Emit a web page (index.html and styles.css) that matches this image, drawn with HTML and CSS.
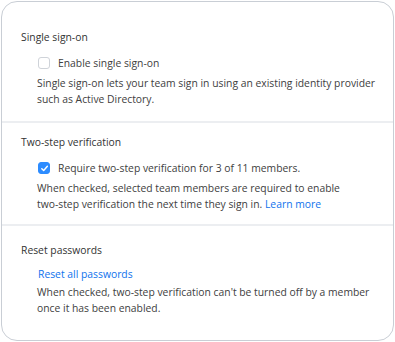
FILE: index.html
```html
<!DOCTYPE html>
<html lang="en">
<head>
    <meta charset="UTF-8">
    <meta name="viewport" content="width=device-width, initial-scale=1.0">
    <title>Security settings</title>
    <link rel="stylesheet" href="styles.css">
</head>
<body>
    <div class="settings-card">
        <div class="setting-section first">
            <div class="section-title">Single sign-on</div>
            <div class="setting-body">
                <label class="check-row">
                    <span class="checkbox"></span>
                    <span>Enable single sign-on</span>
                </label>
                <p class="setting-desc">Single sign-on lets your team sign in using an existing identity provider such as Active Directory.</p>
            </div>
        </div>

        <div class="setting-section">
            <div class="section-title">Two-step verification</div>
            <div class="setting-body">
                <label class="check-row">
                    <span class="checkbox checked">
                        <svg width="9" height="9" viewBox="0 0 10 10"><path d="M2 5.2 L4.1 7.3 L8.2 2.6" fill="none" stroke="#fff" stroke-width="1.6" stroke-linecap="round" stroke-linejoin="round"/></svg>
                    </span>
                    <span>Require two-step verification for 3 of 11 members.</span>
                </label>
                <p class="setting-desc">When checked, selected team members are required to enable <span class="nowrap">two-step</span> verification the next time they sign in. <a href="#" class="link">Learn more</a></p>
            </div>
        </div>

        <div class="setting-section last">
            <div class="section-title">Reset passwords</div>
            <div class="setting-body">
                <a href="#" class="link reset-link">Reset all passwords</a>
                <p class="setting-desc">When checked, two-step verification can't be turned off by a member once it has been enabled.</p>
            </div>
        </div>
    </div>
</body>
</html>
```

FILE: styles.css
```css
* {
    margin: 0;
    padding: 0;
    box-sizing: border-box;
}

body {
    background-color: #fff;
    padding: 1px;
    font-family: 'Open Sans', 'Liberation Sans', sans-serif;
    font-size: 10.35px;
    line-height: 16px;
    color: #404040;
}

.settings-card {
    width: 393px;
    height: 340px;
    border: 1px solid #c9ced5;
    border-radius: 16px;
    background-color: #fff;
    overflow: hidden;
}

.setting-section {
    padding: 11px 11px 12px 19px;
    border-bottom: 2px solid #eceef1;
}

.setting-section.first {
    padding-top: 27px;
    padding-bottom: 14px;
}

.setting-section.last {
    padding-top: 16px;
    border-bottom: none;
}

.section-title {
    color: #333;
    margin-bottom: 10px;
}

.setting-section.last .section-title {
    margin-bottom: 8px;
}

.setting-body {
    padding-left: 16px;
}

.check-row {
    display: flex;
    align-items: center;
    gap: 8px;
    margin-bottom: 4px;
    padding-left: 1px;
}

.checkbox {
    width: 12px;
    height: 12px;
    border: 1px solid #cfd3d9;
    border-radius: 3px;
    background-color: #fff;
    display: flex;
    align-items: center;
    justify-content: center;
}

.checkbox.checked {
    background-color: #2d8cff;
    border-color: #2d8cff;
}

.setting-desc {
    color: #404040;
}

.nowrap {
    white-space: nowrap;
}

.link {
    color: #0e72ed;
    text-decoration: none;
}

.reset-link {
    display: block;
    margin-bottom: 2px;
    padding-left: 1px;
}
```
